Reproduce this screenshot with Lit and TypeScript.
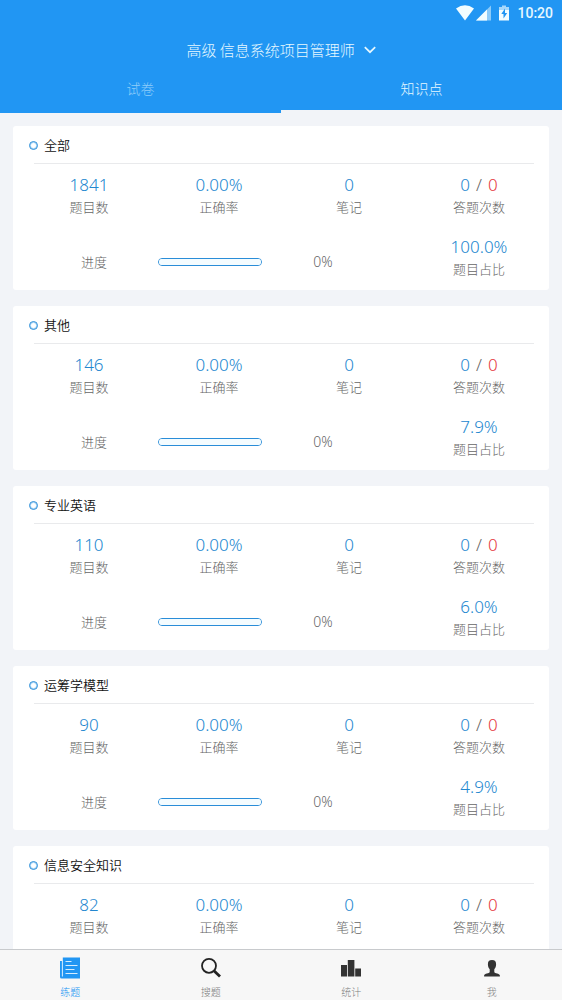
import { LitElement, html, css, svg } from "lit";
import { customElement, property, state } from "lit/decorators.js";
import { classMap } from "lit/directives/class-map.js";

interface Topic {
  name: string;
  count: number;
  share: string;
}

const TOPICS: Topic[] = [
  { name: "全部", count: 1841, share: "100.0%" },
  { name: "其他", count: 146, share: "7.9%" },
  { name: "专业英语", count: 110, share: "6.0%" },
  { name: "运筹学模型", count: 90, share: "4.9%" },
  { name: "信息安全知识", count: 82, share: "4.5%" },
];

@customElement("topic-card")
export class TopicCard extends LitElement {
  @property({ attribute: false }) topic!: Topic;

  static styles = css`
    :host {
      display: block;
      box-sizing: border-box;
      padding: 8px 5px 10px 11px;
      border-radius: 3px;
      background: #fff;
      color: #666;
    }
    .title {
      display: flex;
      align-items: center;
      gap: 6px;
      margin: 0 10px 0 5px;
      height: 22px;
      font-size: 13px;
      font-weight: 350;
      line-height: 22px;
      color: #111;
    }
    .ring {
      flex: none;
      box-sizing: border-box;
      width: 9px;
      height: 9px;
      border: 1px solid #2a8dd8;
      border-radius: 50%;
      box-shadow: inset 0 0 0 1px #a5d3f5;
    }
    .rule {
      margin: 7px 10px 0;
      border: 0;
      border-top: 1px solid #e9eaec;
    }
    .row {
      display: grid;
      grid-template-columns: repeat(4, 1fr);
      align-items: center;
      padding-top: 10px;
    }
    .row + .row {
      padding-top: 18px;
    }
    .stat {
      display: flex;
      flex-direction: column;
      align-items: center;
    }
    .value {
      display: flex;
      gap: 6px;
      font-family: "Noto Sans", sans-serif;
      font-size: 17px;
      line-height: 22px;
      color: #2387cf;
    }
    .slash {
      color: #666;
    }
    .wrong {
      color: #e5383d;
    }
    .label {
      font-size: 13px;
      line-height: 22px;
    }
    .caption {
      padding: 8px 0 0 10px;
      font-size: 13px;
      line-height: 20px;
      text-align: center;
    }
    .track {
      display: block;
      box-sizing: border-box;
      appearance: none;
      width: 80%;
      height: 8px;
      margin: 8px 0 0 4px;
      border: 1px solid #2a8dd8;
      border-radius: 4px;
      background: #f4fcff;
      overflow: hidden;
    }
    .track::-webkit-progress-bar {
      background: #f4fcff;
    }
    .track::-webkit-progress-value {
      background: #2a8dd8;
    }
    .percent {
      width: 60%;
      padding-top: 8px;
      font-family: "Noto Sans", sans-serif;
      font-size: 14px;
      line-height: 20px;
      text-align: center;
    }
  `;

  private stat(value: unknown, label: string) {
    return html`<div class="stat">
      <span class="value">${value}</span><span class="label">${label}</span>
    </div>`;
  }

  render() {
    const t = this.topic;
    return html`
      <h2 class="title"><span class="ring"></span>${t.name}</h2>
      <hr class="rule" />
      <div class="row">
        ${this.stat(t.count, "题目数")} ${this.stat("0.00%", "正确率")} ${this.stat("0", "笔记")}
        ${this.stat(html`<span>0</span><span class="slash">/</span><span class="wrong">0</span>`, "答题次数")}
      </div>
      <div class="row">
        <label class="caption" for="done">进度</label>
        <progress class="track" id="done" max="100" value="0"></progress>
        <span class="percent">0%</span>
        ${this.stat(t.share, "题目占比")}
      </div>
    `;
  }
}

const NAV = [
  {
    label: "练题",
    icon: svg`<path fill="#2196f3" d="M2.8 .5H20V21.500H1.500Q0 21.500 0 20V4H2.800Z"/>
      <path stroke="#d6edff" stroke-width="1" fill="none" d="M2.400 3.500V19.500M5.500 4.500h6M5.500 8.500h12M5.500 12.500h9M5.500 16.500h12"/>`,
  },
  {
    label: "搜题",
    icon: svg`<circle cx="8" cy="8.800" r="7" fill="none" stroke="#222" stroke-width="1.800"/>
      <path d="M13.200 14L19 19.600" stroke="#222" stroke-width="2.800"/>`,
  },
  {
    label: "统计",
    icon: svg`<path fill="#333" d="M0 8h6v11.500H0zM6.800 3h6.600v16.500H6.800zM14.200 11.500H20v8h-5.800z"/>`,
  },
  {
    label: "我",
    icon: svg`<path fill="#333" d="M10 3c2.900 0 4.200 1.500 4.100 4.300 0 2.300-.7 3.800-1.800 4.900v3.100c.4 1.100 5.200 1.100 5.600 3.100v1.100H2.100v-1.100c.4-2 5.200-2 5.600-3.100v-3.100C6.600 11.100 5.900 9.600 5.900 7.300 5.800 4.500 7.100 3 10 3Z"/>`,
  },
];

@customElement("app-root")
export class AppRoot extends LitElement {
  @state() private tab = 1;
  @state() private page = 0;

  static styles = css`
    :host {
      display: flex;
      flex-direction: column;
      height: 100vh;
      background: #f2f4f8;
      font-family: "Noto Sans CJK SC", sans-serif;
      font-weight: 300;
    }
    .header {
      flex: none;
      background: #2196f3;
      color: #e6f8ff;
    }
    .status {
      display: flex;
      justify-content: flex-end;
      align-items: center;
      height: 26px;
      padding-right: 9px;
      font: 500 14px/26px Roboto, sans-serif;
    }
    .signals {
      width: 56px;
      height: 16px;
      margin-right: 5px;
    }
    .course {
      display: flex;
      justify-content: center;
      align-items: center;
      gap: 8px;
      height: 48px;
    }
    .picker {
      appearance: none;
      padding: 0;
      border: 0;
      background: transparent;
      color: inherit;
      font: inherit;
      font-size: 15px;
      line-height: 22px;
    }
    .chevron {
      width: 12px;
      height: 8px;
    }
    .tabs {
      display: flex;
    }
    .tab {
      flex: 1;
      height: 39px;
      padding: 0 0 8px;
      border: 0;
      border-bottom: 3px solid transparent;
      background: none;
      color: #90cdfa;
      font: inherit;
      font-size: 14px;
      line-height: 24px;
    }
    .tab.active {
      border-bottom-color: #f2f4f8;
      color: #e6f8ff;
    }
    .list {
      flex: 1;
      min-height: 0;
      display: flex;
      flex-direction: column;
      gap: 16px;
      padding: 13px 13px 16px;
      overflow-y: auto;
      scrollbar-width: none;
    }
    .card {
      flex: none;
    }
    .nav {
      flex: none;
      display: flex;
      border-top: 1px solid #c8cacd;
      background: #f7f7f7;
    }
    .item {
      flex: 1;
      display: flex;
      flex-direction: column;
      align-items: center;
      gap: 5px;
      padding: 7px 0 0;
      border: 0;
      background: none;
      color: #808080;
      font: inherit;
      font-size: 10px;
      line-height: 16px;
    }
    .item.active {
      color: #2196f3;
    }
    .icon {
      width: 20px;
      height: 22px;
    }
  `;

  render() {
    return html`
      <header class="header">
        <div class="status">
          <svg class="signals" viewBox="0 0 56 16" aria-hidden="true">
            <path fill="#f2fdff" d="M0 3.600Q9-3 18 3.600L9 15.500Z" />
            <path fill="#8ccbf9" d="M35 .5V15.500H20Z" />
            <path fill="#f2fdff" d="M31 4.500V15.500H20Z" />
            <path fill="#a6d8fb" d="M46 .5h4v1.500h3v4H43V2h3z" />
            <path fill="#f2fdff" d="M43 5h10v10.500H43z" />
            <path fill="#2196f3" d="M49 3.500L45.300 9h2.200v4.500L51.200 8H49z" />
          </svg>
          <span>10:20</span>
        </div>
        <div class="course">
          <select class="picker" aria-label="考试科目">
            <option>高级 信息系统项目管理师</option>
          </select>
          <svg class="chevron" viewBox="0 0 12 8" aria-hidden="true">
            <path d="M.8 1.200L6 6.200L11.200 1.200" fill="none" stroke="#e6f8ff" stroke-width="1.700" />
          </svg>
        </div>
        <div class="tabs" role="tablist">
          ${["试卷", "知识点"].map(
            (name, i) => html`<button
              class=${classMap({ tab: true, active: this.tab === i })}
              role="tab"
              aria-selected=${this.tab === i}
              @click=${() => (this.tab = i)}
            >${name}</button>`
          )}
        </div>
      </header>
      <main class="list">
        ${TOPICS.map((t) => html`<topic-card class="card" .topic=${t}></topic-card>`)}
      </main>
      <nav class="nav">
        ${NAV.map(
          (n, i) => html`<button
            class=${classMap({ item: true, active: this.page === i })}
            @click=${() => (this.page = i)}
          ><svg class="icon" viewBox="0 0 20 22" aria-hidden="true">${n.icon}</svg>${n.label}</button>`
        )}
      </nav>
    `;
  }
}
